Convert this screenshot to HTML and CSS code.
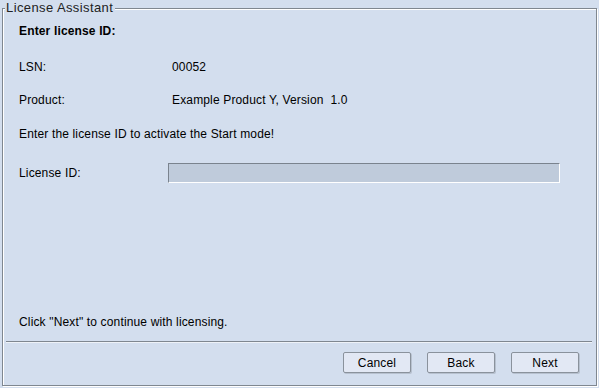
FILE: index.html
```html
<!DOCTYPE html>
<html lang="en">
<head>
  <meta charset="UTF-8" />
  <title>License Assistant</title>
  <link rel="stylesheet" href="styles.css">
</head>
<body>

  <!-- Titled (etched) panel -->
  <div class="panel">
    <div class="panel-title">License Assistant</div>

    <div class="heading">Enter license ID:</div>

    <div class="row info">
      <span class="label">LSN:</span>
      <span class="value">00052</span>
    </div>

    <div class="row info">
      <span class="label">Product:</span>
      <span class="value">Example Product Y, Version&nbsp; 1.0</span>
    </div>

    <div class="hint">Enter the license ID to activate the Start mode!</div>

    <div class="row id-row">
      <span class="label">License ID:</span>
      <input class="id-input" type="text" disabled>
    </div>

    <div class="spacer"></div>

    <div class="footer-text">Click "Next" to continue with licensing.</div>

    <div class="separator"></div>

    <div class="buttons">
      <button class="btn">Cancel</button>
      <button class="btn">Back</button>
      <button class="btn">Next</button>
    </div>
  </div>

</body>
</html>
```

FILE: styles.css
```css
* { margin: 0; padding: 0; box-sizing: border-box; }

body {
  background: #d3deee;
  color: #000;
  font-family: 'Liberation Sans', Arial, sans-serif;
  font-size: 12px;
  line-height: 14px;
  letter-spacing: 0.15px;
  width: 599px;
  height: 388px;
  overflow: hidden;
}

.panel {
  position: relative;
  margin: 8px 0 0 2px;
  width: 595px;
  height: 378px;
  border: 1px solid #7f8790;
  box-shadow: inset 1px 1px 0 #fff, 1px 1px 0 #fff;
  display: flex;
  flex-direction: column;
  padding: 15px 0 0 16px;
}

.panel-title {
  position: absolute;
  top: -9px;
  left: 2px;
  padding: 0 2px 0 1px;
  background: #d3deee;
  color: #222;
  font-size: 13px;
  line-height: 16px;
  letter-spacing: 0.4px;
}

.heading {
  font-weight: bold;
}

.row {
  display: flex;
  align-items: center;
}

.label {
  width: 153px;
}

.info {
  margin-top: 22px;
}

.info + .info {
  margin-top: 19px;
}

.hint {
  margin-top: 20px;
}

.id-row {
  margin-top: 22px;
}

.id-input {
  width: 392px;
  height: 20px;
  margin-left: -4px;
  background: #bfcbdb;
  border: 1px solid #fff;
  border-top-color: #7a838e;
  border-left-color: #7a838e;
  outline: none;
}

.spacer {
  flex: 1;
}

.footer-text {
  margin-bottom: 12px;
}

.separator {
  margin-left: -13px;
  width: 586px;
  height: 2px;
  border-top: 1px solid #7f8790;
  border-bottom: 1px solid #eef2f8;
}

.buttons {
  display: flex;
  justify-content: flex-end;
  gap: 16px;
  padding: 9px 17px 12px 0;
}

.btn {
  width: 68px;
  height: 21px;
  font-family: 'Liberation Sans', Arial, sans-serif;
  font-size: 12px;
  letter-spacing: 0.15px;
  color: #000;
  background: #e2e8f4;
  border: 1px solid #8a929c;
  border-radius: 2px;
  box-shadow: 1px 1px 0 #b7c1cf;
}
```
